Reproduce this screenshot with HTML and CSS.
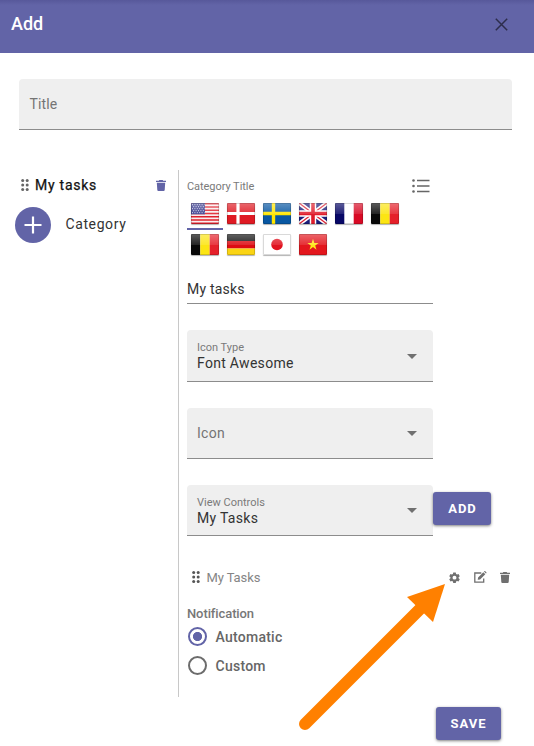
FILE: index.html
```html
<!DOCTYPE html>
<html lang="en">
<head>
<meta charset="utf-8">
<title>Add</title>
<link rel="stylesheet" href="styles.css">
</head>
<body>
<svg class="defs" width="0" height="0">
  <defs>
    <linearGradient id="gloss" x1="0" y1="0" x2="0" y2="1">
      <stop offset="0" stop-color="#fff" stop-opacity=".34"/>
      <stop offset=".5" stop-color="#fff" stop-opacity=".12"/>
      <stop offset=".52" stop-color="#fff" stop-opacity="0"/>
    </linearGradient>
    <symbol id="trash" viewBox="0 0 10 11"><path d="M0 .8h2.8L3.3 0h3.4l.5.8H10V2H0zM.8 2.8h8.4L8.7 10q-.1 1-1 1H2.3q-.9 0-1-1z"/></symbol>
    <symbol id="grip" viewBox="0 0 8 12"><circle cx="1.7" cy="1.6" r="1.5"/><circle cx="6.2" cy="1.6" r="1.5"/><circle cx="1.7" cy="6" r="1.5"/><circle cx="6.2" cy="6" r="1.5"/><circle cx="1.7" cy="10.4" r="1.5"/><circle cx="6.2" cy="10.4" r="1.5"/></symbol>
    <symbol id="belgium" viewBox="0 0 28 21"><path fill="#080808" d="M0 0h9.3v21H0z"/><path fill="#fce513" d="M9.3 0h9.4v21H9.3z"/><path fill="#e5202a" d="M18.7 0H28v21h-9.3z"/></symbol>
    <symbol id="frame" viewBox="0 0 28 21"><path fill="url(#gloss)" d="M0 0h28v21H0z"/><path fill="none" stroke="#000" stroke-opacity=".15" d="M.5.5h27v20H.5z"/></symbol>
  </defs>
</svg>
<header class="bar">
  <h1>Add</h1>
  <svg class="close" viewBox="0 0 13 13"><path d="M.8.8l11.4 11.4M12.2.8L.8 12.2"/></svg>
</header>
<main>
  <div class="field title"><span class="placeholder">Title</span></div>
  <div class="columns">
    <aside>
      <div class="category">
        <svg class="grip"><use href="#grip"/></svg>
        <span class="category-name">My tasks</span>
        <svg class="trash accent"><use href="#trash"/></svg>
      </div>
      <div class="new-category">
        <span class="plus"><svg viewBox="0 0 18 18"><path d="M9 .5v17M.5 9h17"/></svg></span>
        <span>Category</span>
      </div>
    </aside>
    <section>
      <div class="caption-row">
        <span class="caption">Category Title</span>
        <svg class="list" viewBox="0 0 18 14"><path d="M5 1.5h12.5M5 7h12.5M5 12.5h12.5"/><circle cx="1.5" cy="1.5" r="1.3"/><circle cx="1.5" cy="7" r="1.3"/><circle cx="1.5" cy="12.5" r="1.3"/></svg>
      </div>
      <div class="flags">
        <span class="flag active"><svg viewBox="0 0 28 21"><path fill="#f8eeee" d="M0 0h28v21H0z"/><path stroke="#df1f2b" stroke-width="1.62" d="M0 .8h28M0 4.04h28M0 7.27h28M0 10.5h28M0 13.73h28M0 16.96h28M0 20.2h28"/><path fill="#34368a" d="M0 0h14v11.3H0z"/><path stroke="#d4d5ed" stroke-width="1" stroke-dasharray="1 1.4" d="M1 1.7h12.5M2.2 3.7h11M1 5.7h12.5M2.2 7.7h11M1 9.7h12.5"/><use href="#frame"/></svg></span>
        <span class="flag"><svg viewBox="0 0 28 21"><path fill="#df1a23" d="M0 0h28v21H0z"/><path stroke="#fff" stroke-width="3.2" d="M11 0v21M0 10.5h28"/><use href="#frame"/></svg></span>
        <span class="flag"><svg viewBox="0 0 28 21"><path fill="#0857a2" d="M0 0h28v21H0z"/><path stroke="#ffe600" stroke-width="3.4" d="M10.5 0v21M0 10.5h28"/><use href="#frame"/></svg></span>
        <span class="flag"><svg viewBox="0 0 28 21"><path fill="#1b1c78" d="M0 0h28v21H0z"/><path stroke="#fff" stroke-width="4.4" d="M0 0l28 21M28 0L0 21"/><path stroke="#dc1f32" stroke-width="1.3" d="M0 0l28 21M28 0L0 21"/><path stroke="#fff" stroke-width="6.5" d="M14 0v21M0 10.5h28"/><path stroke="#df1c2b" stroke-width="3.6" d="M14 0v21M0 10.5h28"/><use href="#frame"/></svg></span>
        <span class="flag"><svg viewBox="0 0 28 21"><path fill="#fff" d="M0 0h28v21H0z"/><path fill="#070766" d="M0 0h9.3v21H0z"/><path fill="#d80a25" d="M18.7 0H28v21h-9.3z"/><use href="#frame"/></svg></span>
        <span class="flag"><svg viewBox="0 0 28 21"><use href="#belgium"/><use href="#frame"/></svg></span>
        <span class="flag"><svg viewBox="0 0 28 21"><use href="#belgium"/><use href="#frame"/></svg></span>
        <span class="flag"><svg viewBox="0 0 28 21"><path fill="#111" d="M0 0h28v7H0z"/><path fill="#dc0c12" d="M0 7h28v7.5H0z"/><path fill="#fad414" d="M0 14.5h28V21H0z"/><use href="#frame"/></svg></span>
        <span class="flag"><svg viewBox="0 0 28 21"><path fill="#fff" d="M0 0h28v21H0z"/><circle cx="14" cy="10.5" r="5.8" fill="#e1121e"/><use href="#frame"/></svg></span>
        <span class="flag"><svg viewBox="0 0 28 21"><path fill="#e3161d" d="M0 0h28v21H0z"/><path fill="#ffe615" d="M14 4.8l1.35 4.1h4.35l-3.5 2.6 1.3 4.2L14 13.1l-3.5 2.6 1.3-4.2-3.5-2.6h4.35z"/><use href="#frame"/></svg></span>
      </div>
      <div class="input">My tasks</div>
      <div class="field select">
        <div class="stack"><span class="caption">Icon Type</span><span class="value">Font Awesome</span></div>
        <span class="arrow"></span>
      </div>
      <div class="field select">
        <span class="placeholder">Icon</span>
        <span class="arrow"></span>
      </div>
      <div class="control-row">
        <div class="field select">
          <div class="stack"><span class="caption">View Controls</span><span class="value">My Tasks</span></div>
          <span class="arrow"></span>
        </div>
        <button class="add">ADD</button>
      </div>
      <div class="task">
        <svg class="grip"><use href="#grip"/></svg>
        <span class="task-name">My Tasks</span>
        <svg class="gear" viewBox="0 0 24 24"><path fill-rule="evenodd" d="M9.2 1h5.6l.6 3.3 2.2 1.3 3.2-1.2 2.7 4.8-2.6 2.1v2.4l2.6 2.1-2.7 4.8-3.2-1.2-2.2 1.3-.6 3.3H9.2l-.6-3.3-2.2-1.3-3.2 1.2-2.7-4.8 2.6-2.1v-2.4L.5 9.2l2.7-4.8 3.2 1.2 2.2-1.3zM12 8a4.300 4.300 0 1 0 0 8.600A4.300 4.300 0 0 0 12 8z"/></svg>
        <svg class="edit" viewBox="0 0 13 12"><path class="outline" d="M7.3 2H.8v9.2h8.900V7.500"/><path d="M4.100 6.400L9.300 1.200l2 2L6.100 8.400l-2.400.4zM9.900.6l.4-.4q.5-.4 1 0l1 1q.4.500 0 1l-.4.400z"/></svg>
        <svg class="trash"><use href="#trash"/></svg>
      </div>
      <div class="legend">Notification</div>
      <div class="radio"><span class="dot checked"></span>Automatic</div>
      <div class="radio"><span class="dot"></span>Custom</div>
    </section>
  </div>
  <footer><button class="save">SAVE</button></footer>
</main>
<svg class="pointer" viewBox="0 0 146 148"><path class="shaft" d="M6 140L124 22"/><path d="M146 0L108 13l26 25z"/></svg>
</body>
</html>
```
FILE: styles.css
```css
* { box-sizing: border-box; }
body {
  margin: 0;
  width: 534px;
  height: 746px;
  overflow: hidden;
  position: relative;
  background: #fff;
  color: #333;
  font: 14px/20px Roboto, sans-serif;
  letter-spacing: .3px;
}
svg { display: block; flex: none; }
.defs { position: absolute; }
.bar {
  height: 53px;
  display: flex;
  justify-content: space-between;
  padding: 12px 26px 0 11px;
  background: linear-gradient(#57589a, #6264a7 5px);
}
h1 { margin: 0; font-size: 18px; line-height: 24px; font-weight: 500; letter-spacing: 0; color: #fff; }
.close { width: 13px; height: 13px; margin-top: 5.5px; fill: none; stroke: #2d2d4c; stroke-width: 1.5; }
main { padding: 26px 22px 0 15px; }
.field {
  height: 51px;
  background: #efefef;
  border-bottom: 1px solid #8c8c8c;
  border-radius: 4px 4px 0 0;
  display: flex;
  align-items: center;
  padding: 0 16px 0 10px;
}
.title { margin-left: 4px; }
.title .placeholder { letter-spacing: .15px; padding-left: .5px; }
.placeholder { color: #747474; }
.columns { display: flex; margin-top: 40px; height: 527px; }
aside { width: 164px; border-right: 1px solid #c8c8c8; }
.category { display: flex; align-items: center; height: 30px; padding: 0 12px 0 6px; }
.category-name { flex: 1; margin-left: 6px; color: #111; font-weight: 400; letter-spacing: .75px; -webkit-text-stroke: .25px #111; }
.grip { width: 8px; height: 12px; fill: #666; }
.trash { width: 10px; height: 11px; fill: #6f6f6f; }
.accent { fill: #6264a7; }
.new-category { display: flex; align-items: center; gap: 14.5px; margin-top: 7px; letter-spacing: .6px; }
.new-category span:last-child { margin-top: -2px; }
.plus { width: 36px; height: 36px; border-radius: 50%; background: #6264a7; display: grid; place-items: center; }
.plus svg { width: 18px; height: 18px; stroke: #fff; stroke-width: 2.2; }
section { width: 333px; padding-left: 8px; }
.caption-row { width: 243px; height: 30px; padding-top: 2px; display: flex; align-items: center; justify-content: space-between; }
.caption { color: #7a7a7a; font-size: 11px; line-height: 14px; letter-spacing: 0; }
.caption-row .caption { padding-top: 2px; letter-spacing: -.05px; }
.list { width: 18px; height: 14px; fill: #666; stroke: #666; stroke-width: 1.5; }
.list circle { stroke: none; }
.flags { display: grid; grid-template-columns: repeat(6, 36px); grid-auto-rows: 31px; }
.flag { padding: 3px 4.5px 0 3.5px; }
.flag svg { width: 28px; height: 21px; border-radius: 1px; box-shadow: 0 1px 1px rgba(0, 0, 0, .3); }
.active { height: 30px; border-bottom: 2px solid #6264a7; }
.input { width: 246px; height: 31px; margin-top: 11px; padding-top: 6px; border-bottom: 1px solid #8c8c8c; letter-spacing: .2px; }
.select { width: 246px; justify-content: space-between; margin-top: 27px; }
.input + .select { height: 52px; margin-top: 26px; }
.select + .select { margin-top: 26px; }
.stack { display: flex; flex-direction: column; padding-top: 1px; }
.value { line-height: 16px; }
.arrow { border: 5px solid transparent; border-top-color: #707070; border-bottom: 0; margin-top: 1px; }
.control-row { display: flex; align-items: center; margin-top: 26px; }
.control-row .select { margin: 0; }
.control-row .stack { padding-top: 2px; }
button {
  border: 0;
  border-radius: 3px;
  padding: 0;
  height: 33px;
  background: #6264a7;
  color: #fff;
  font: 700 13px/33px Roboto, sans-serif;
  letter-spacing: 1px;
  text-align: center;
  box-shadow: 0 1px 3px rgba(0, 0, 0, .5);
}
.add { width: 58px; margin-top: -4px; padding-left: 1px; }
.task { display: flex; align-items: center; height: 20px; margin-top: 31px; padding: 0 2px 0 5px; }
.task-name { flex: 1; margin: 1px 0 0 6.5px; font-size: 13px; letter-spacing: -.1px; color: #858585; }
.task .grip { fill: #555; }
.gear { width: 11px; height: 11px; fill: #707070; margin-right: 13.5px; }
.edit { width: 13px; height: 12px; fill: #707070; margin-right: 13.5px; }
.outline { fill: none; stroke: #707070; stroke-width: 1.3; }
.legend { margin-top: 18px; height: 17px; font-size: 13px; line-height: 18px; font-weight: 500; letter-spacing: -.1px; color: #777; }
.radio { display: flex; align-items: center; gap: 8.5px; height: 29px; padding-left: 1px; font-weight: 500; letter-spacing: .25px; color: #666; }
.dot { width: 19px; height: 19px; border: 2px solid #6c6c6c; border-radius: 50%; }
.checked { border-color: #6264a7; background: radial-gradient(circle, #6264a7 4.2px, transparent 5px); }
footer { display: flex; justify-content: flex-end; margin-top: 10px; padding-right: 11px; }
.save { width: 65px; }
.pointer { position: absolute; left: 299px; top: 584px; width: 146px; height: 148px; fill: #ff8000; }
.shaft { fill: none; stroke: #ff8000; stroke-width: 12; stroke-linecap: round; }
```
